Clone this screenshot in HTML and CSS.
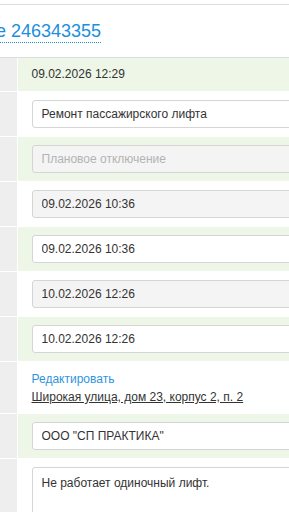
FILE: index.html
```html
<!DOCTYPE html>
<html lang="ru">
<head>
    <meta charset="UTF-8">
    <meta name="viewport" content="width=device-width, initial-scale=1.0">
    <title>Заявка 246343355</title>
    <link rel="stylesheet" href="styles.css">
</head>
<body>
    <div class="page">
        <div class="header">
            <h1><a href="#" class="title-link">Обращение 246343355</a></h1>
        </div>

        <table class="card">
            <tr class="green">
                <td class="label"></td>
                <td class="value"><span class="plain">09.02.2026 12:29</span></td>
            </tr>
            <tr>
                <td class="label"></td>
                <td class="value"><input type="text" value="Ремонт пассажирского лифта" /></td>
            </tr>
            <tr class="green">
                <td class="label"></td>
                <td class="value"><input type="text" placeholder="Плановое отключение" disabled /></td>
            </tr>
            <tr>
                <td class="label"></td>
                <td class="value"><input type="text" value="09.02.2026 10:36" disabled /></td>
            </tr>
            <tr class="green">
                <td class="label"></td>
                <td class="value"><input type="text" value="09.02.2026 10:36" /></td>
            </tr>
            <tr>
                <td class="label"></td>
                <td class="value"><input type="text" value="10.02.2026 12:26" disabled /></td>
            </tr>
            <tr class="green">
                <td class="label"></td>
                <td class="value"><input type="text" value="10.02.2026 12:26" /></td>
            </tr>
            <tr>
                <td class="label"></td>
                <td class="value address-cell">
                    <a href="#" class="edit-link">Редактировать</a>
                    <a href="#" class="address">Широкая улица, дом 23, корпус 2, п. 2</a>
                </td>
            </tr>
            <tr class="green">
                <td class="label"></td>
                <td class="value"><input type="text" value='ООО "СП ПРАКТИКА"' /></td>
            </tr>
            <tr>
                <td class="label"></td>
                <td class="value"><textarea>Не работает одиночный лифт.</textarea></td>
            </tr>
        </table>
    </div>
</body>
</html>
```

FILE: styles.css
```css
* { margin: 0; padding: 0; box-sizing: border-box; }
body { font-family: "Liberation Sans", Arial, sans-serif; font-size: 12px; color: #333; background-color: #fff; overflow: hidden; }
.page { width: 420px; }
.header { border-top: 1px solid #ddd; border-bottom: 1px solid #ddd; margin-top: 4px; height: 54px; padding-top: 16px; overflow: hidden; }
h1 { font-size: 18px; font-weight: normal; line-height: 21px; white-space: nowrap; margin-left: -93px; }
.title-link { color: #1b8fdf; text-decoration: none; border-bottom: 1px dotted #1b8fdf; padding-bottom: 1px; }
.card { width: 100%; border-collapse: collapse; }
.card td { border-bottom: 1px solid #fff; vertical-align: top; }
.label { width: 17px; background-color: #eee; border-right: 1px solid #fff; }
.value { padding: 8px 0 8px 14px; }
.green .value { background-color: #edf6e7; }
.plain { display: block; line-height: 17px; }
input, textarea { display: block; width: 100%; height: 28px; padding: 0 9px; font-family: inherit; font-size: 12px; color: #333; background-color: #fff; border: 1px solid #d5d5d5; border-radius: 3px; }
input:disabled { background-color: #f4f4f4; color: #333; }
input::placeholder { color: #b3b3b3; }
textarea { height: 60px; padding: 7px 9px; line-height: 16px; resize: none; }
.address-cell { padding-bottom: 7px; }
.edit-link, .address { display: block; line-height: 18px; }
.edit-link { color: #2f95dc; text-decoration: none; }
.address { color: #333; text-decoration: underline; }
```
